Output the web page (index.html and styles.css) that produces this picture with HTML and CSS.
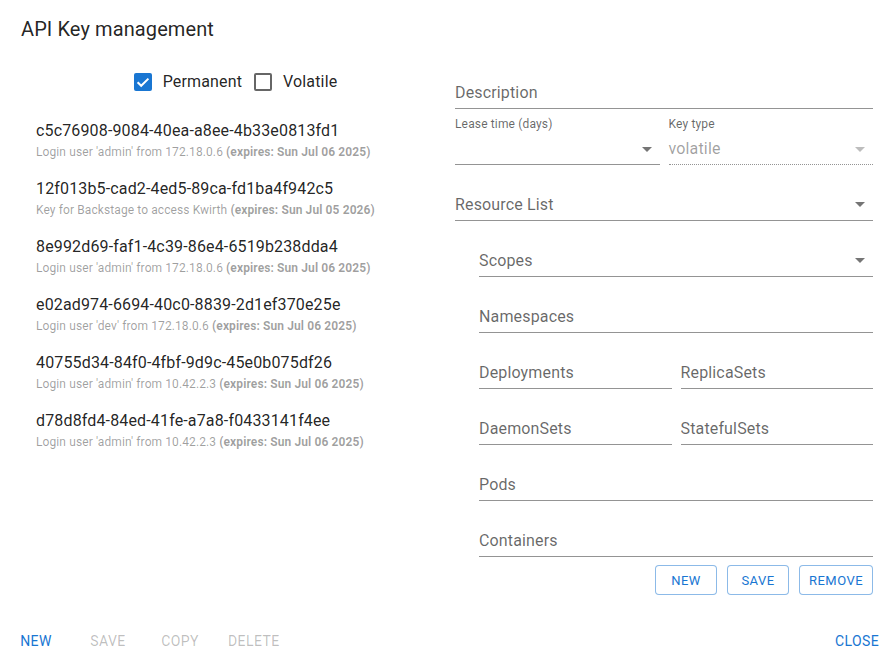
FILE: index.html
```html
<!DOCTYPE html>
<html>
<head>
<meta charset="utf-8">
<link rel="stylesheet" href="styles.css">
</head>
<body>
<div class="dialog">
  <h2 class="title">API Key management</h2>
  <div class="content">
    <div class="left">
      <div class="checks">
        <label class="check">
          <span class="box checked">
            <svg viewBox="0 0 18 18" width="18" height="18"><path d="M3.6 9.2l3.6 3.6 7.2-7.2" fill="none" stroke="#fff" stroke-width="2"/></svg>
          </span>
          <span class="check-label">Permanent</span>
        </label>
        <label class="check">
          <span class="box"></span>
          <span class="check-label">Volatile</span>
        </label>
      </div>
      <ul class="keys">
        <li class="key"><div class="primary">c5c76908-9084-40ea-a8ee-4b33e0813fd1</div><div class="secondary">Login user 'admin' from 172.18.0.6 <b>(expires: Sun Jul 06 2025)</b></div></li>
        <li class="key"><div class="primary">12f013b5-cad2-4ed5-89ca-fd1ba4f942c5</div><div class="secondary">Key for Backstage to access Kwirth <b>(expires: Sun Jul 05 2026)</b></div></li>
        <li class="key"><div class="primary">8e992d69-faf1-4c39-86e4-6519b238dda4</div><div class="secondary">Login user 'admin' from 172.18.0.6 <b>(expires: Sun Jul 06 2025)</b></div></li>
        <li class="key"><div class="primary">e02ad974-6694-40c0-8839-2d1ef370e25e</div><div class="secondary">Login user 'dev' from 172.18.0.6 <b>(expires: Sun Jul 06 2025)</b></div></li>
        <li class="key"><div class="primary">40755d34-84f0-4fbf-9d9c-45e0b075df26</div><div class="secondary">Login user 'admin' from 10.42.2.3 <b>(expires: Sun Jul 06 2025)</b></div></li>
        <li class="key"><div class="primary">d78d8fd4-84ed-41fe-a7a8-f0433141f4ee</div><div class="secondary">Login user 'admin' from 10.42.2.3 <b>(expires: Sun Jul 06 2025)</b></div></li>
      </ul>
    </div>
    <div class="right">
      <div class="field"><span class="label">Description</span></div>
      <div class="row">
        <div class="field select small-label">
          <span class="mini">Lease time (days)</span>
          <div class="value-row"><span class="value"></span><svg class="arrow" viewBox="0 0 24 24" width="24" height="24"><path d="M7 10l5 5 5-5z"/></svg></div>
        </div>
        <div class="field select small-label disabled">
          <span class="mini">Key type</span>
          <div class="value-row"><span class="value">volatile</span><svg class="arrow" viewBox="0 0 24 24" width="24" height="24"><path d="M7 10l5 5 5-5z"/></svg></div>
        </div>
      </div>
      <div class="field select"><span class="label">Resource List</span><svg class="arrow" viewBox="0 0 24 24" width="24" height="24"><path d="M7 10l5 5 5-5z"/></svg></div>
      <div class="nested">
        <div class="field select"><span class="label">Scopes</span><svg class="arrow" viewBox="0 0 24 24" width="24" height="24"><path d="M7 10l5 5 5-5z"/></svg></div>
        <div class="field"><span class="label">Namespaces</span></div>
        <div class="row">
          <div class="field"><span class="label">Deployments</span></div>
          <div class="field"><span class="label">ReplicaSets</span></div>
        </div>
        <div class="row">
          <div class="field"><span class="label">DaemonSets</span></div>
          <div class="field"><span class="label">StatefulSets</span></div>
        </div>
        <div class="field"><span class="label">Pods</span></div>
        <div class="field"><span class="label">Containers</span></div>
        <div class="res-actions">
          <button class="outlined">NEW</button>
          <button class="outlined">SAVE</button>
          <button class="outlined">REMOVE</button>
        </div>
      </div>
    </div>
  </div>
  <div class="actions">
    <div class="group">
      <button class="text">NEW</button>
      <button class="text off">SAVE</button>
      <button class="text off">COPY</button>
      <button class="text off">DELETE</button>
    </div>
    <button class="text">CLOSE</button>
  </div>
</div>
</body>
</html>
```

FILE: styles.css
```css
* { box-sizing: border-box; }
html, body { margin: 0; padding: 0; background: #fff; }
body {
  font-family: Roboto, "Liberation Sans", Arial, sans-serif;
  color: rgba(0,0,0,0.87);
  width: 895px;
  height: 664px;
  overflow: hidden;
}
.dialog {
  height: 664px;
  display: flex;
  flex-direction: column;
}
.title {
  margin: 0;
  padding: 13px 21px 0;
  font-size: 20px;
  font-weight: 400;
  line-height: 32px;
  letter-spacing: 0.1px;
}
.content {
  flex: 1;
  display: flex;
  padding: 0 22px 0 20px;
  gap: 4px;
}
.left { width: 431px; }
.right { flex: 1; padding-top: 8px; }

.checks {
  display: flex;
  justify-content: center;
  margin-top: 25px;
  height: 24px;
  align-items: center;
  gap: 12px;
}
.check { display: flex; align-items: center; gap: 11px; }
.box {
  width: 18px; height: 18px;
  border: 2px solid rgba(0,0,0,0.6);
  border-radius: 2px;
  display: flex;
}
.box.checked { background: #1976d2; border: 0; }
.check-label { font-size: 16px; line-height: 24px; letter-spacing: 0.15px; }

.keys { list-style: none; margin: 19px 0 0; padding: 0; }
.key { padding: 6px 16px 8px; }
.primary { font-size: 16px; line-height: 24px; letter-spacing: 0.15px; }
.secondary { font-size: 12px; line-height: 19px; padding-bottom: 1px; color: rgba(0,0,0,0.38); letter-spacing: 0.1px; }
.secondary b { font-weight: 700; }

.field {
  height: 56px;
  display: flex;
  align-items: flex-end;
  padding-bottom: 3px;
  border-bottom: 1px solid rgba(0,0,0,0.42);
  position: relative;
}
.label {
  font-size: 16px; line-height: 24px; color: rgba(0,0,0,0.6);
  letter-spacing: 0.15px;
}
.field.select .arrow {
  position: absolute; right: 1px; bottom: 4px;
  fill: rgba(0,0,0,0.54);
}
.small-label { flex-direction: column; align-items: stretch; justify-content: space-between; padding-top: 7px; }
.mini { font-size: 12px; line-height: 16px; color: rgba(0,0,0,0.6); letter-spacing: 0.15px; }
.value-row { height: 24px; position: relative; display: flex; align-items: center; }
.value { font-size: 16px; line-height: 24px; letter-spacing: 0.15px; }
.value-row .arrow { position: absolute; right: 1px; top: 0; fill: rgba(0,0,0,0.54); }
.disabled { border-bottom: 1px dotted rgba(0,0,0,0.42); }
.disabled .value { color: rgba(0,0,0,0.38); }
.disabled .value-row .arrow { fill: rgba(0,0,0,0.26); }

.row { display: grid; grid-template-columns: 1fr 1fr; gap: 9px; }
.nested { padding-left: 24px; }

button { font-family: inherit; cursor: pointer; }
.res-actions { display: flex; justify-content: flex-end; gap: 10px; margin-top: 8px; }
.outlined {
  height: 30px; min-width: 62px;
  padding: 3px 9px;
  font-size: 13px; font-weight: 400; letter-spacing: 0.46px;
  color: #1976d2; background: #fff;
  border: 1px solid rgba(25,118,210,0.5);
  border-radius: 4px;
}
.actions {
  display: flex;
  justify-content: space-between;
  align-items: center;
  padding: 0 6px 5px 4px;
}
.group { display: flex; gap: 8px; }
.text {
  height: 36px; min-width: 64px;
  padding: 6px 8px;
  font-size: 14px; font-weight: 400; letter-spacing: 0.4px;
  color: #1976d2; background: none; border: 0;
}
.text.off { color: rgba(0,0,0,0.26); }
```
